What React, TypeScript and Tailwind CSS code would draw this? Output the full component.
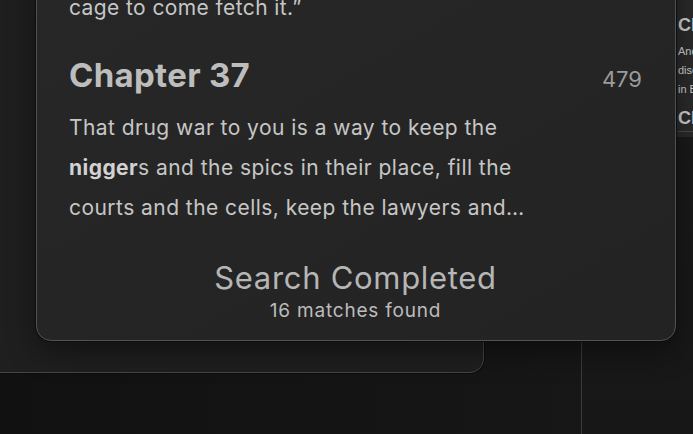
import React from 'react'

const sans = { fontFamily: 'Inter, "Noto Sans", sans-serif' }

function Sidebar() {
  return (
    <div className="absolute left-[581px] top-[-20px] right-[-40px] bottom-[-20px] border-l border-[#3c3c3c] bg-gradient-to-b from-[#1b1b1b] to-[#171717]">
      <div
        className="h-[157px] bg-[#2a2a2a] pl-[96px] pt-[32px] overflow-hidden whitespace-nowrap text-[#cfcfcf]"
        style={{ fontFamily: '"Liberation Sans", Arial, sans-serif' }}
      >
        <p className="text-[18px] font-bold leading-[26px]">Chapter 36</p>
        <p className="text-[11px] leading-[19px] mt-[4px]">And what we</p>
        <p className="text-[11px] leading-[19px]">discovered</p>
        <p className="text-[11px] leading-[19px]">in Baltimore</p>
        <p className="text-[18px] font-bold leading-[26px] mt-[6px] border-b border-[#4a4a4a]">Chapter 37</p>
      </div>
    </div>
  )
}

function ResultsPanel() {
  return (
    <div
      className="absolute left-[36px] top-[-40px] w-[640px] rounded-b-[15px] border border-[#525252] bg-gradient-to-br from-[#272727] to-[#232323] shadow-[0_0_0_1px_#0e0e0e,0_10px_30px_rgba(0,0,0,0.45)] pl-[32px] pr-[33px] pt-[27px] pb-[18px] flex flex-col"
      style={sans}
    >
      <p className="text-[21px] leading-[40px] text-[#c6c6c6] tracking-[0.4px]">
        cage to come fetch it.”
      </p>
      <div className="mt-[27px] flex items-baseline justify-between">
        <h2 className="text-[33px] leading-[40px] font-bold text-[#bdbdbd] tracking-[0.3px]">Chapter 37</h2>
        <span className="text-[22px] leading-[40px] text-[#9b9b9b]">479</span>
      </div>
      <p className="mt-[9px] text-[21px] leading-[40px] text-[#c6c6c6] tracking-[0.45px]">
        That drug war to you is a way to keep the
        <br />
        <b className="font-bold text-[#d2d2d2]">nigger</b>s and the spics in their place, fill the
        <br />
        courts and the cells, keep the lawyers and…
      </p>
      <div className="mt-[32px] flex flex-col items-center">
        <p className="text-[31px] leading-[36px] text-[#b6b6b6] tracking-[0.7px]">Search Completed</p>
        <p className="mt-[4px] text-[19px] leading-[22px] text-[#bcbcbc] tracking-[0.8px]">16 matches found</p>
      </div>
    </div>
  )
}

export default function App() {
  return (
    <div className="relative w-[693px] h-[434px] overflow-hidden bg-gradient-to-r from-[#111111] to-[#181818]">
      <Sidebar />
      {/* window behind the results */}
      <div className="absolute left-[-20px] top-[-20px] w-[504px] h-[393px] rounded-br-[14px] border border-[#474747] bg-[#1f1f1f] shadow-[0_0_0_1px_#0c0c0c]" />
      <ResultsPanel />
    </div>
  )
}
